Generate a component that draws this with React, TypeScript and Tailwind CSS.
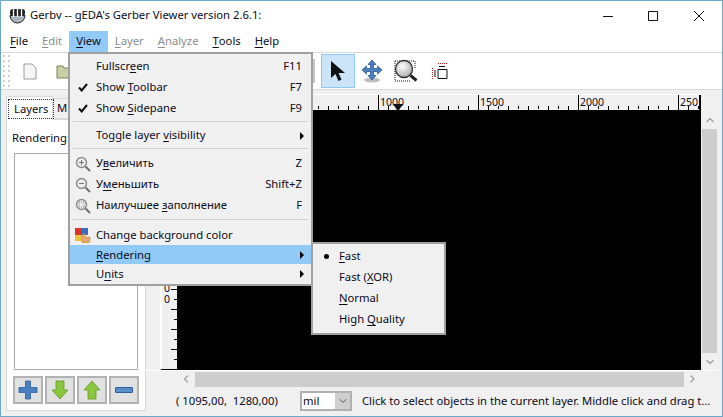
import type { ReactNode } from "react";
import { ChevronDown, ChevronLeft, ChevronRight, ChevronUp } from "lucide-react";

const U = ({ children }: { children: string }) => <span className="underline underline-offset-2">{children}</span>;

function Glass({ mark }: { mark: "plus" | "minus" | "fit" }) {
  return (
    <svg width="16" height="16" viewBox="0 0 16 16" fill="none">
      <circle cx="6.5" cy="6.5" r="5" fill="#ececec" stroke="#8a8a8a" strokeWidth="1.4" />
      <path d="M10.5 10.5L15 15" stroke="#6d6d6d" strokeWidth="2" />
      {mark !== "fit" && <path d="M4 6.5h5" stroke="#777" />}
      {mark === "plus" && <path d="M6.5 4v5" stroke="#777" />}
      {mark === "fit" && <path d="M4 4h5v5h-5z" stroke="#888" strokeDasharray="1 1" />}
    </svg>
  );
}

const Check = () => (
  <svg width="10" height="9" viewBox="0 0 10 9" fill="none">
    <path d="M1 4.500L3.700 7.500L9 1" stroke="#111" strokeWidth="2" />
  </svg>
);

function MenuRow({ check, icon, label, accel, arrow, row = "h-[21px]" }: { check?: boolean; icon?: ReactNode; label: ReactNode; accel?: string; arrow?: boolean; row?: string }) {
  return (
    <div className={`flex items-center pl-[1px] pr-[8px] ${row}`}>
      <div className="flex w-[25px] shrink-0 items-center justify-center pr-[1px]">
        {check && <Check />}
        {icon}
      </div>
      <span className="flex-1 whitespace-nowrap">{label}</span>
      {accel && <span className="mr-[1px] whitespace-nowrap">{accel}</span>}
      {arrow && <span className="-mr-[1px] h-0 w-0 border-y-[4px] border-l-[4px] border-y-transparent border-l-black" />}
    </div>
  );
}

function ToolIcon({ children, active }: { children: ReactNode; active?: boolean }) {
  return <div className={`flex h-[34px] w-[34px] shrink-0 items-center justify-center ${active ? "border border-[#90c8f6] bg-[#cce4f7]" : ""}`}>{children}</div>;
}

function LayerButton({ children }: { children: ReactNode }) {
  return <div className="flex h-[28px] w-[30px] items-center justify-center border-2 border-[#b2b2b2] bg-[#e1e1e1]">{children}</div>;
}

export default function App() {
  const topTicks = Array.from({ length: 54 }, (_, i) => i);
  const sideTicks = Array.from({ length: 9 }, (_, i) => i);
  return (
    <div className="relative flex h-[417px] w-[723px] flex-col overflow-hidden border border-[#6fa8c8] bg-[#f0f0f0] font-['Noto_Sans',sans-serif] text-[11.25px] text-[#0b0b20]">
      {/* title */}
      <div className="flex h-[29px] shrink-0 items-center bg-white pl-[8px]">
        <svg width="17" height="17" viewBox="0 0 17 17" className="mr-[4px]">
          <path d="M1 8.500a7.500 7.500 0 0 0 15 0z" fill="#aab4bc" stroke="#222" />
          <rect x="1" y="2" width="15" height="7" rx="3" fill="#222" />
          <path d="M4.500 1v9M8.500 1v9M12.500 1v9" stroke="#fff" strokeWidth="1.300" />
        </svg>
        <span className="flex-1">Gerbv -- gEDA's Gerber Viewer version 2.6.1:</span>
        <svg width="102" height="12" viewBox="0 0 102 12" fill="none" stroke="#111" className="mr-[17px]">
          <path d="M0 6.500h10" />
          <path d="M45.500 1.500h9v9h-9z" />
          <path d="M91 1l10 10M101 1l-10 10" />
        </svg>
      </div>
      {/* menu */}
      <div className="flex h-[22px] shrink-0 items-end bg-white pl-[2px]">
        {[
          ["F", "ile", 1],
          ["E", "dit", 0],
          ["V", "iew", 2],
          ["L", "ayer", 0],
          ["A", "nalyze", 0],
          ["T", "ools", 1],
          ["H", "elp", 1],
        ].map(([a, b, state]) => (
          <div key={b as string} className={`flex h-[21px] items-center px-[7px] ${state === 2 ? "bg-[#91c9f7]" : ""} ${state === 0 ? "text-[#8c8c8c]" : ""}`}>
            <U>{a as string}</U>
            {b}
          </div>
        ))}
      </div>
      {/* toolbar */}
      <div className="flex h-[38px] shrink-0 items-center border-y border-[#d9d9d9] bg-white pl-[2px]">
        <svg width="8" height="34" viewBox="0 0 8 34" className="mr-[2px] shrink-0" fill="#cfcfcf">
          {[1, 6, 11, 16, 21, 26, 31].map((y) => (
            <g key={y}>
              <rect x="0" y={y} width="2" height="2" />
              <rect x="5" y={y} width="2" height="2" />
            </g>
          ))}
        </svg>
        <ToolIcon>
          <svg width="14" height="17" viewBox="0 0 14 17" fill="#f6f6f6" stroke="#9a9a9a"><path d="M1 1h8l4 4v11H1z" /></svg>
        </ToolIcon>
        <div className="flex w-[274px] shrink-0 items-center justify-between pl-[9px] pr-[6px]">
          <svg width="20" height="15" viewBox="0 0 20 15" fill="#c9cfa0" stroke="#7d8060"><path d="M1 2h6l1 2h11v10H1z" /></svg>
          <div className="h-[24px] w-[2px] bg-[#c8c8c8]" />
        </div>
        <ToolIcon active>
          <svg width="18" height="24" viewBox="0 0 18 24" fill="#111"><path d="M2 2v17l4.500-4 3 7 3-1.500-3-6.500h6.500z" /></svg>
        </ToolIcon>
        <ToolIcon>
          <svg width="24" height="24" viewBox="0 0 24 24" strokeWidth="0.8">
            <ellipse cx="12" cy="21" rx="8" ry="2.500" fill="#bdbdbd" />
            <path d="M12 1l4 4.500h-2.500v4h4V7l4.500 4-4.500 4v-2.500h-4v4H16L12 21l-4-4.500h2.500v-4h-4V15L2 11l4.500-4v2.500h4v-4H8z" fill="#4a7fc0" stroke="#2a5a96" />
          </svg>
        </ToolIcon>
        <ToolIcon>
          <svg width="26" height="26" viewBox="0 0 26 26" fill="none">
            <defs>
              <radialGradient id="lens" cx="0.4" cy="0.35" r="0.7">
                <stop offset="0" stopColor="#ffffff" />
                <stop offset="1" stopColor="#a8a8a8" />
              </radialGradient>
            </defs>
            <path d="M2 3h20M2 3v20M2 23h15M22 3v8" stroke="#111" strokeDasharray="1 1" />
            <circle cx="11" cy="11" r="8.500" fill="url(#lens)" stroke="#333" strokeWidth="1.300" />
            <path d="M17.500 17.500l6 5" stroke="#222" strokeWidth="3" />
          </svg>
        </ToolIcon>
        <ToolIcon>
          <svg width="16" height="18" viewBox="0 0 16 18" fill="none">
            <path d="M6 7.500h9v9H6z" stroke="#111" />
            <path d="M6 1.500h9M.500 6v11" stroke="#d22" strokeDasharray="1 1" />
            <path d="M7 4.500h6M3 8v7" stroke="#111" />
          </svg>
        </ToolIcon>
      </div>
      {/* body */}
      <div className="flex min-h-0 flex-1">
        <div className="flex w-[145px] shrink-0 flex-col pb-[5px] pl-[5px] pt-[6px]">
          <div className="flex h-[23px] shrink-0 items-start">
            <div className="z-10 flex h-[24px] w-[47px] items-center border border-b-0 border-[#d9d9d9] bg-white pl-[3px]">
              <span className="outline-1 outline-dotted outline-[#333] px-[5px] py-[2px] leading-[14px] -ml-[1px] whitespace-nowrap">Layers</span>
            </div>
            <div className="mt-[2px] flex h-[21px] w-[20px] items-center overflow-hidden border-y border-r border-[#d9d9d9] pl-[4px]">M</div>
          </div>
          <div className="flex min-h-0 flex-1 flex-col border border-[#d9d9d9] bg-white px-[7px] pb-[6px] pt-[9px]">
            <div className="mb-[6px] h-[18px] -ml-[2px] leading-[18px]">Rendering:</div>
            <div className="min-h-0 flex-1 border border-[#aaa] bg-white" />
            <div className="-mx-[1px] mt-[6px] flex gap-[2px]">
              <LayerButton>
                <svg width="20" height="20" viewBox="0 0 20 20" fill="#4a7fc0" stroke="#2f5f9e" strokeWidth="0.8"><path d="M7.500 1h5v6.500H19v5h-6.500V19h-5v-6.500H1v-5h6.500z" /></svg>
              </LayerButton>
              <LayerButton>
                <svg width="18" height="20" viewBox="0 0 18 20" fill="#8cc63f" stroke="#5f9a22" strokeWidth="0.8"><path d="M5 1h8v9h4l-8 9-8-9h4z" /></svg>
              </LayerButton>
              <LayerButton>
                <svg width="18" height="20" viewBox="0 0 18 20" fill="#8cc63f" stroke="#5f9a22" strokeWidth="0.8"><path d="M5 19h8v-9h4L9 1 1 10h4z" /></svg>
              </LayerButton>
              <LayerButton>
                <div className="h-[6px] w-[18px] rounded-[1px] border border-[#2f5f9e] bg-[#5b8ccb]" />
              </LayerButton>
            </div>
          </div>
        </div>
        <div className="flex min-w-0 flex-1 flex-col pr-[4px] pt-[4px]">
          <div className="flex min-h-0 flex-1 pl-[14px]">
            <div className="flex min-w-0 flex-1 flex-col">
              <div className="relative h-[16px] shrink-0 overflow-hidden border-t border-white text-[10.5px] leading-none">
                <div className="absolute bottom-0 left-[8px] flex gap-[9px]">
                  {topTicks.map((t) => (
                    <div key={t} className={`w-px bg-black ${t % 2 ? "h-[3px]" : "h-[4px]"}`} />
                  ))}
                </div>
                <div className="absolute left-[218px] top-0 flex gap-[99px]">
                  {["1000", "1500", "2000", "250"].map((v) => (
                    <div key={v} className="h-[15px] w-px shrink-0 bg-black">
                      <span className="block pl-[2px] pt-[2px]">{v}</span>
                    </div>
                  ))}
                </div>
                <div className="absolute right-0 top-0 h-[15px] w-[2px] bg-black" />
                <svg width="10" height="6" viewBox="0 0 10 6" className="absolute bottom-0 left-[233px]"><path d="M0 0h10L6 6H4z" fill="#111" /></svg>
              </div>
              <div className="flex min-h-0 flex-1">
                <div className="relative flex w-[17px] shrink-0 flex-col items-end justify-end gap-[9px] border-b border-l-2 border-b-black border-l-white pb-[9px] text-[10.5px] leading-[10px]">
                  <span className="absolute left-[2px] top-[173px]">0</span>
                  <span className="absolute left-[2px] top-[184px]">0</span>
                  {sideTicks.map((t) => (
                    <div key={t} className={`h-px bg-black ${t % 2 ? "w-[6px]" : "w-[3px]"}`} />
                  ))}
                </div>
                <div className="min-w-0 flex-1 bg-black" />
              </div>
            </div>
            <div className="flex w-[17px] shrink-0 flex-col items-center pt-[16px] text-[#a5a5a5]">
              <div className="flex h-[19px] items-center"><ChevronUp size={12} strokeWidth={3} /></div>
              <div className="w-[15px] flex-1 bg-[#cdcdcd]" />
              <div className="flex h-[17px] items-center"><ChevronDown size={12} strokeWidth={3} /></div>
            </div>
          </div>
          <div className="flex h-[17px] shrink-0 items-center border-t border-white pl-[31px] pr-[17px] text-[#a5a5a5]">
            <ChevronLeft size={12} strokeWidth={3} className="w-[18px] shrink-0" />
            <div className="h-[15px] flex-1 bg-[#cdcdcd]" />
            <ChevronRight size={12} strokeWidth={3} className="w-[17px] shrink-0" />
          </div>
          <div className="flex h-[29px] shrink-0 items-center pb-[1px] pl-[30px]">
            <span className="w-[124px] shrink-0 whitespace-pre">( 1095,00,  1280,00)</span>
            <div className="flex h-[20px] w-[52px] shrink-0 items-center border-2 border-[#b0b0b0] bg-white pl-[1px]">
              <span className="flex-1">mil</span>
              <div className="flex h-full w-[15px] items-center justify-center bg-[#cfcfcf] text-[#555]"><ChevronDown size={12} /></div>
            </div>
            <span className="ml-[10px] whitespace-nowrap">Click to select objects in the current layer. Middle click and drag t...</span>
          </div>
        </div>
      </div>

      {/* view menu */}
      <div className="absolute left-[67px] top-[51px] w-[245px] border-2 border-[#a0a0a0] bg-[#f0f0f0] pb-[1px] pt-[2px]">
        <MenuRow label={<>Fullscr<U>e</U>en</>} accel="F11" />
        <MenuRow check label={<>Show <U>T</U>oolbar</>} accel="F7" />
        <MenuRow check label={<>Show <U>S</U>idepane</>} accel="F9" />
        <div className="mx-[3px] mb-[3px] mt-[2px] h-px bg-[#d2d2d2]" />
        <MenuRow label={<>Toggle layer <U>v</U>isibility</>} arrow />
        <div className="mx-[3px] mb-[4px] mt-[2px] h-px bg-[#d2d2d2]" />
        <MenuRow icon={<Glass mark="plus" />} label={<>У<U>в</U>еличить</>} accel="Z" />
        <MenuRow icon={<Glass mark="minus" />} label={<>У<U>м</U>еньшить</>} accel="Shift+Z" />
        <MenuRow icon={<Glass mark="fit" />} label={<>Наилучшее <U>з</U>аполнение</>} accel="F" />
        <div className="mx-[3px] mb-[5px] mt-[3px] h-px bg-[#d2d2d2]" />
        <MenuRow
          row="h-[20px]"
          icon={
            <svg width="16" height="16" viewBox="0 0 16 16">
              <rect x="0" y="1" width="7" height="7" fill="#d9342b" />
              <rect x="7" y="1" width="6" height="7" fill="#3b6cc4" />
              <rect x="0" y="8" width="7" height="6" fill="#e8c33a" />
              <path d="M7 16v-6l1-3h2v3h5v4l-1 2z" fill="#e5a969" stroke="#b9803f" strokeWidth="0.5" />
            </svg>
          }
          label="Change background color"
        />
        <MenuRow row="h-[19px] bg-[#91c9f7] pt-[1px]" label={<><U>R</U>endering</>} arrow />
        <MenuRow row="h-[19px] pt-[1px]" label={<>U<U>n</U>its</>} arrow />
      </div>

      {/* rendering submenu */}
      <div className="absolute left-[310px] top-[241px] w-[135px] border-2 border-[#a0a0a0] bg-[#f0f0f0] pb-[3px] pt-[2px]">
        <MenuRow icon={<span className="h-[5px] w-[5px] rounded-full bg-black" />} label={<><U>F</U>ast</>} />
        <MenuRow label={<>Fast (<U>X</U>OR)</>} />
        <MenuRow label={<><U>N</U>ormal</>} />
        <MenuRow label={<>High <U>Q</U>uality</>} />
      </div>
    </div>
  );
}
